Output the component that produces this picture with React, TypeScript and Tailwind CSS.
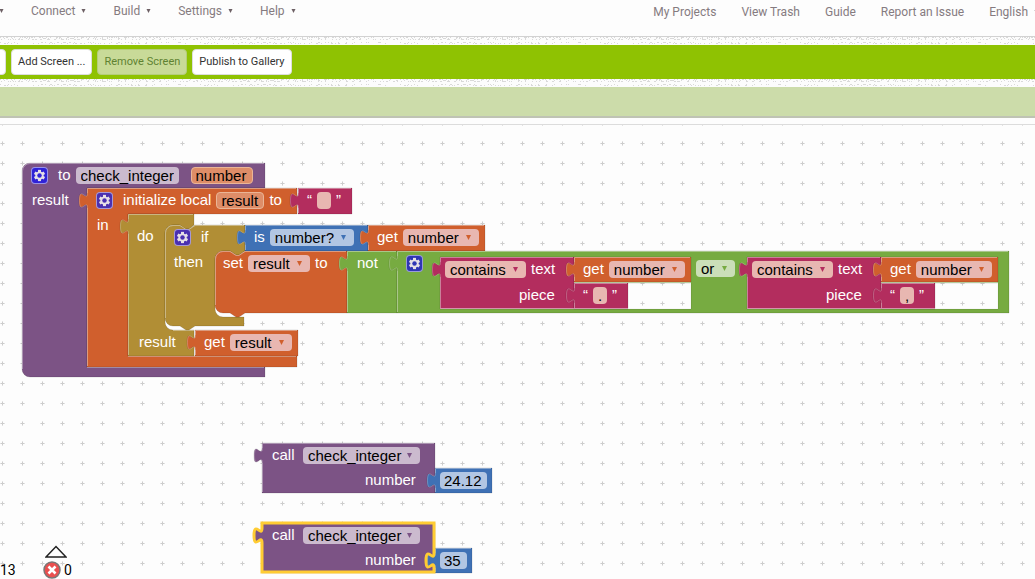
import type { ReactNode } from 'react';

const PURPLE = '#7c5385';
const ORANGE = '#d05f2d';
const OLIVE = '#b18e35';
const BLUE = '#3f71b5';
const GREEN = '#77ab41';
const PINK = '#b32d5e';

// Outline pieces shared by the blocks
const PLUG = 'V20 c0,-10 -8,8 -8,-7.5 s8,2.5 8,-7.5';
const PLUG_EDGE = 'M.5,20 c0,-10 -8,8 -8,-7.5 s8,2.5 8,-7.5';
const NOTCH = 'l6,4 3,0 6,-4';
const NOTCH_BACK = 'l-6,4 -3,0 -6,-4';

interface Shape {
  x: number;
  y: number;
  color: string;
  d: string;
  shine: string;
  plug?: boolean;
}

function valueBlock(x: number, y: number, w: number, h: number, color: string): Shape {
  return {
    x,
    y,
    color,
    plug: true,
    d: `M0,0 H${w} V${h} H0 ${PLUG} z`,
    shine: `M.5,${h - 1} V20 M.5,5 V.5 H${w - 1}`,
  };
}

const shapes: Shape[] = [
  {
    x: 22,
    y: 38,
    color: PURPLE,
    d: 'M0,8 a8,8 0 0 1 8,-8 H243 V25 H65 V204 H243 V214 H8 a8,8 0 0 1 -8,-8 z',
    shine: 'M.5,206 V8 a7.5,7.5 0 0 1 7.5,-7.5 H242 M65,204.5 H242',
  },
  {
    x: 87,
    y: 63,
    color: ORANGE,
    plug: true,
    d: `M0,0 H210 V26 H41 V168 H210 V179 H0 ${PLUG} z`,
    shine: 'M.5,178 V20 M.5,5 V.5 H209 M41,168.5 H209',
  },
  valueBlock(298, 63, 54, 26, PINK),
  {
    x: 128,
    y: 89,
    color: OLIVE,
    plug: true,
    d: `M0,0 H66 V11 l-5,4 -4,0 -6,-4 H45 a8,8 0 0 0 -8,8 V108 a8,8 0 0 0 8,8 H66 V142 H0 ${PLUG} z`,
    shine: 'M.5,141 V20 M.5,5 V.5 H65 M45,116.5 H66',
  },
  {
    x: 165,
    y: 100,
    color: OLIVE,
    d: `M0,8 a8,8 0 0 1 8,-8 H15 ${NOTCH} H80 V26 ${NOTCH_BACK} H58 a8,8 0 0 0 -8,8 V84 a8,8 0 0 0 8,8 H79 V101 H30 ${NOTCH_BACK} H8 a8,8 0 0 1 -8,-8 z`,
    shine: `M.5,93 V8 a7.5,7.5 0 0 1 7.5,-7.5 H15 ${NOTCH} H79`,
  },
  valueBlock(245, 100, 123, 26, BLUE),
  valueBlock(368, 100, 117, 26, ORANGE),
  {
    x: 215,
    y: 126,
    color: ORANGE,
    d: `M0,8 a8,8 0 0 1 8,-8 H15 ${NOTCH} H132 V62 H30 ${NOTCH_BACK} H8 a8,8 0 0 1 -8,-8 z`,
    shine: `M.5,54 V8 a7.5,7.5 0 0 1 7.5,-7.5 H15 ${NOTCH} H131`,
  },
  valueBlock(347, 126, 50, 62, GREEN),
  {
    x: 397,
    y: 126,
    color: GREEN,
    plug: true,
    d: `M0,0 H612 V62 H0 ${PLUG} z M177,32 V58 H294 V32 z M484,32 V58 H601 V32 z`,
    shine: 'M.5,61 V20 M.5,5 V.5 H611',
  },
  valueBlock(440, 132, 134, 52, PINK),
  valueBlock(574, 132, 117, 25, ORANGE),
  valueBlock(574, 158, 54, 26, PINK),
  valueBlock(747, 132, 134, 52, PINK),
  valueBlock(881, 132, 117, 25, ORANGE),
  valueBlock(881, 158, 54, 26, PINK),
  valueBlock(195, 205, 103, 26, ORANGE),
  valueBlock(262, 318, 173, 50, PURPLE),
  valueBlock(435, 343, 57, 25, BLUE),
  valueBlock(262, 398, 173, 50, PURPLE),
  valueBlock(435, 423, 37, 25, BLUE),
];

// Outline of the block that has the focus, following its empty socket
const selectedOutline = `M0,0 H172 V30 c0,10 -8,-8 -8,7.5 s8,-2.5 8,7.5 V49 H0 ${PLUG} z`;

function BlockShapes() {
  return (
    <svg className="absolute inset-0 h-full w-full" aria-hidden="true">
      <defs>
        <pattern id="grid" width="20" height="20" x="-8" y="8" patternUnits="userSpaceOnUse">
          <path d="M8,10.5 H13 M10.5,8 V13" stroke="#e2e2e2" />
          <path d="M9,10.5 H12 M10.5,9 V12" stroke="#cdcdcd" />
        </pattern>
      </defs>
      <rect width="100%" height="100%" fill="url(#grid)" />
      {shapes.map((s, i) => (
        <g key={i} transform={`translate(${s.x},${s.y})`}>
          <path d={s.d} fill={s.color} fillRule="evenodd" stroke="#000" strokeOpacity="0.12" />
          <path d={s.shine} fill="none" stroke="#fff" strokeOpacity="0.4" />
          {s.plug && <path d={PLUG_EDGE} fill="none" stroke="#fff" strokeOpacity="0.25" />}
        </g>
      ))}
      <path
        d="M574,157.5 H690.5 V183.5 H440 M881,157.5 H997.5 V183.5 H747"
        fill="none"
        stroke="#fff"
        strokeOpacity="0.5"
      />
      <path
        d={selectedOutline}
        transform="translate(262,398)"
        fill="none"
        stroke="#fc3"
        strokeWidth="3"
      />
    </svg>
  );
}

function Caret({ className }: { className: string }) {
  return (
    <svg viewBox="0 0 5 5" className={className} fill="currentColor" aria-hidden="true">
      <path d="M0,0 H5 L2.5,5 z" />
    </svg>
  );
}

// One line of fields on the workspace canvas
function Row({ x, y, children }: { x: number; y: number; children: ReactNode }) {
  return (
    <div className="absolute flex h-[25px] items-center gap-[10px] whitespace-nowrap" style={{ left: x, top: y }}>
      {children}
    </div>
  );
}

function Mutator({ tint = 'bg-[#4a30b0] text-[#4a30b0]' }: { tint?: string }) {
  return (
    <button
      type="button"
      aria-label="Edit block"
      className={`flex h-[17px] w-[17px] items-center justify-center rounded-[4px] border border-white/50 ${tint}`}
    >
      <svg viewBox="-8 -8 16 16" className="h-[15px] w-[15px] shrink-0" aria-hidden="true">
        <g fill="#e6e0e6">
          <rect x="-1.6" y="-6" width="3.2" height="12" />
          <rect x="-1.6" y="-6" width="3.2" height="12" transform="rotate(60)" />
          <rect x="-1.6" y="-6" width="3.2" height="12" transform="rotate(120)" />
          <circle r="4.4" />
        </g>
        <circle r="2.4" fill="currentColor" />
      </svg>
    </button>
  );
}

interface DropdownProps {
  label: string;
  value: string;
  width: string;
  tint?: string;
  arrow?: string;
}

function Dropdown({ label, value, width, tint = 'bg-[#e8b7b1]', arrow = 'text-[#d05f2d]' }: DropdownProps) {
  return (
    <span className={`relative -mx-[5px] flex ${width}`}>
      <select
        aria-label={label}
        defaultValue={value}
        className={`h-[17px] w-full appearance-none rounded-[4px] pl-[5px] leading-[17px] text-black ${tint}`}
      >
        <option>{value}</option>
      </select>
      <Caret className={`pointer-events-none absolute top-[6px] right-[8px] h-[5px] w-[5px] ${arrow}`} />
    </span>
  );
}

function Field({ label, value, look }: { label: string; value: string; look: string }) {
  return (
    <input
      aria-label={label}
      defaultValue={value}
      className={`-mx-[5px] h-[17px] rounded-[4px] leading-[17px] text-black ${look}`}
    />
  );
}

function Quoted({ value }: { value: string }) {
  return (
    <span className="flex items-center gap-[5px]">
      <span>“</span>
      <input
        aria-label="Text"
        defaultValue={value}
        className="h-[17px] w-[14px] rounded-[4px] bg-[#e8b7b1] text-center leading-[17px] text-black"
      />
      <span>”</span>
    </span>
  );
}

function GetBlock({ x, y, name, width }: { x: number; y: number; name: string; width: string }) {
  return (
    <Row x={x} y={y}>
      <span>get</span>
      <Dropdown label="Variable" value={name} width={width} />
    </Row>
  );
}

function ContainsBlock({ x, piece }: { x: number; piece: string }) {
  return (
    <>
      <Row x={x + 10} y={132}>
        <Dropdown label="Text test" value="contains" width="w-[81px]" arrow="text-[#b32d5e]" />
        <span>text</span>
      </Row>
      <Row x={x + 79} y={158}>
        <span>piece</span>
      </Row>
      <GetBlock x={x + 143} y={132} name="number" width="w-[76px]" />
      <Row x={x + 143} y={158}>
        <Quoted value={piece} />
      </Row>
    </>
  );
}

function CallBlock({ y, value, width }: { y: number; value: string; width: string }) {
  return (
    <>
      <Row x={272} y={y}>
        <span className="w-[26px]">call</span>
        <Dropdown
          label="Procedure"
          value="check_integer"
          width="w-[117px]"
          tint="bg-[#cbbace]"
          arrow="text-[#7c5385]"
        />
      </Row>
      <Row x={365} y={y + 25}>
        <span>number</span>
      </Row>
      <Row x={445} y={y + 25}>
        <Field label="Number" value={value} look={`bg-[#b2c6e3] px-[4px] ${width}`} />
      </Row>
    </>
  );
}

function Workspace() {
  return (
    <main className="relative flex-1 overflow-hidden border-t border-[#dcdcdc] font-['Liberation_Sans',Arial,sans-serif] text-[15px] text-white">
      <BlockShapes />

      <Row x={31} y={38}>
        <Mutator tint="bg-[#2f22d6] text-[#2f22d6]" />
        <span>to</span>
        <Field label="Procedure name" value="check_integer" look="w-[103px] bg-[#cbbace] px-[5px]" />
        <span className="ml-[12px] flex">
          <Field
            label="Argument"
            value="number"
            look="w-[62px] border border-[#eab596] bg-[#de8d68] px-[4px]"
          />
        </span>
      </Row>
      <Row x={32} y={63}>
        <span>result</span>
      </Row>
      <Row x={96} y={63}>
        <Mutator />
        <span>initialize local</span>
        <Field label="Local name" value="result" look="w-[48px] border border-[#eab596] bg-[#de8d68] px-[4px]" />
        <span>to</span>
      </Row>
      <Row x={307} y={63}>
        <Quoted value="" />
      </Row>
      <Row x={97} y={88}>
        <span>in</span>
      </Row>
      <Row x={137} y={99}>
        <span>do</span>
      </Row>

      <Row x={174} y={100}>
        <Mutator />
        <span>if</span>
      </Row>
      <Row x={174} y={125}>
        <span>then</span>
      </Row>
      <Row x={254} y={100}>
        <span>is</span>
        <Dropdown label="Number test" value="number?" width="w-[84px]" tint="bg-[#b2c6e3]" arrow="text-[#3f71b5]" />
      </Row>
      <GetBlock x={377} y={100} name="number" width="w-[76px]" />

      <Row x={223} y={126}>
        <span>set</span>
        <Dropdown label="Variable" value="result" width="w-[62px]" />
        <span>to</span>
      </Row>
      <Row x={357} y={126}>
        <span>not</span>
      </Row>
      <Row x={406} y={126}>
        <Mutator tint="bg-[#2f35b4] text-[#2f35b4]" />
      </Row>
      <ContainsBlock x={440} piece="." />
      <Row x={701} y={131}>
        <Dropdown label="Logic" value="or" width="w-[39px]" tint="bg-[#cbdfb8]" arrow="text-[#77ab41]" />
      </Row>
      <ContainsBlock x={747} piece="," />

      <Row x={139} y={205}>
        <span>result</span>
      </Row>
      <GetBlock x={204} y={205} name="result" width="w-[62px]" />

      <CallBlock y={318} value="24.12" width="w-[47px]" />
      <CallBlock y={398} value="35" width="w-[27px]" />

      <Warnings />
    </main>
  );
}

function Warnings() {
  return (
    <div className="absolute bottom-0 left-0 flex items-end font-[Roboto,sans-serif] text-[14px] leading-[18px] text-black">
      <span className="w-[43px]">13</span>
      <div>
        <button type="button" aria-label="Previous warning" className="ml-[2px] block pb-[3px]">
          <svg viewBox="0 0 22 13" className="h-[13px] w-[22px]" fill="#fff" stroke="#222" strokeWidth="1.5">
            <path d="M1,12 L11,1.5 L21,12 z" />
          </svg>
        </button>
        <span className="flex items-center gap-[3px]">
          <svg viewBox="0 0 18 18" className="h-[18px] w-[18px]" aria-hidden="true">
            <circle cx="9" cy="9" r="8" fill="#e94f4f" stroke="#777" strokeWidth="1.5" />
            <path d="M5.5,5.5 L12.5,12.5 M12.5,5.5 L5.5,12.5" stroke="#fff" strokeWidth="2.6" />
          </svg>
          <span>0</span>
        </span>
      </div>
    </div>
  );
}

// Speckled paper texture between the bars
const specks = Array.from({ length: 260 }, (_, i) => ({
  x: (i * 97 + ((i * i) % 31) * 7) % 200,
  y: [0, 0, 2, 5, 1, 6, 2][(i * 5 + ((i * i) % 11)) % 7],
}));

function Texture({ id }: { id: string }) {
  return (
    <svg className="block h-2 w-full bg-[#fcfcfc]" aria-hidden="true">
      <pattern id={id} width="200" height="8" patternUnits="userSpaceOnUse">
        {specks.map((s, i) => (
          <rect key={i} x={s.x} y={s.y} width="1" height="1" fill="#d9d9d9" />
        ))}
      </pattern>
      <rect width="100%" height="8" fill={`url(#${id})`} />
    </svg>
  );
}

const menus = ['Connect', 'Build', 'Settings', 'Help'];
const links = ['My Projects', 'View Trash', 'Guide', 'Report an Issue'];

function MenuButton({ name }: { name: string }) {
  return (
    <button type="button" aria-label={name || 'Projects'} className="flex items-center gap-[6px]">
      {name}
      <Caret className="h-1 w-[5px] text-[#6d6065]" />
    </button>
  );
}

function Header() {
  return (
    <header className="flex h-[37px] items-start justify-between overflow-hidden border-b border-[#d2d2d2] bg-[#fdfdfd] pt-[3px] text-[12px] leading-4 text-[#857b80]">
      <nav className="-ml-px flex gap-[27px]">
        <MenuButton name="" />
        {menus.map((name) => (
          <MenuButton key={name} name={name} />
        ))}
      </nav>
      <nav className="-mr-[4px] flex gap-[25px] whitespace-nowrap">
        {links.map((name) => (
          <a key={name} href="#" className="pt-px">
            {name}
          </a>
        ))}
        <MenuButton name="English" />
      </nav>
    </header>
  );
}

function Toolbar() {
  const base = 'h-[26px] rounded-[4px] border px-[6px] text-[11px] whitespace-nowrap';
  return (
    <div className="flex h-[34px] items-center gap-[5px] overflow-hidden bg-[#8fc202]">
      <button type="button" aria-label="Screen" className={`${base} -ml-[8px] border-[#ddd] bg-white`} />
      <button type="button" className={`${base} border-[#ddd] bg-white text-[#333]`}>Add Screen ...</button>
      <button type="button" disabled className={`${base} border-[#b5cd7c] bg-[#c8da98] text-[#5f8232]`}>
        Remove Screen
      </button>
      <button type="button" className={`${base} border-[#ddd] bg-white text-[#333]`}>Publish to Gallery</button>
    </div>
  );
}

export default function App() {
  return (
    <div className="flex min-h-screen flex-col overflow-hidden bg-[#fdfdfd] font-[Roboto,sans-serif]">
      <Header />
      <Texture id="specks-top" />
      <Toolbar />
      <Texture id="specks-bottom" />
      <div className="h-[31px] border-b-2 border-[#bfc3b4] bg-[#ccdcaa]" />
      <div className="h-[6px]" />
      <Workspace />
    </div>
  );
}
